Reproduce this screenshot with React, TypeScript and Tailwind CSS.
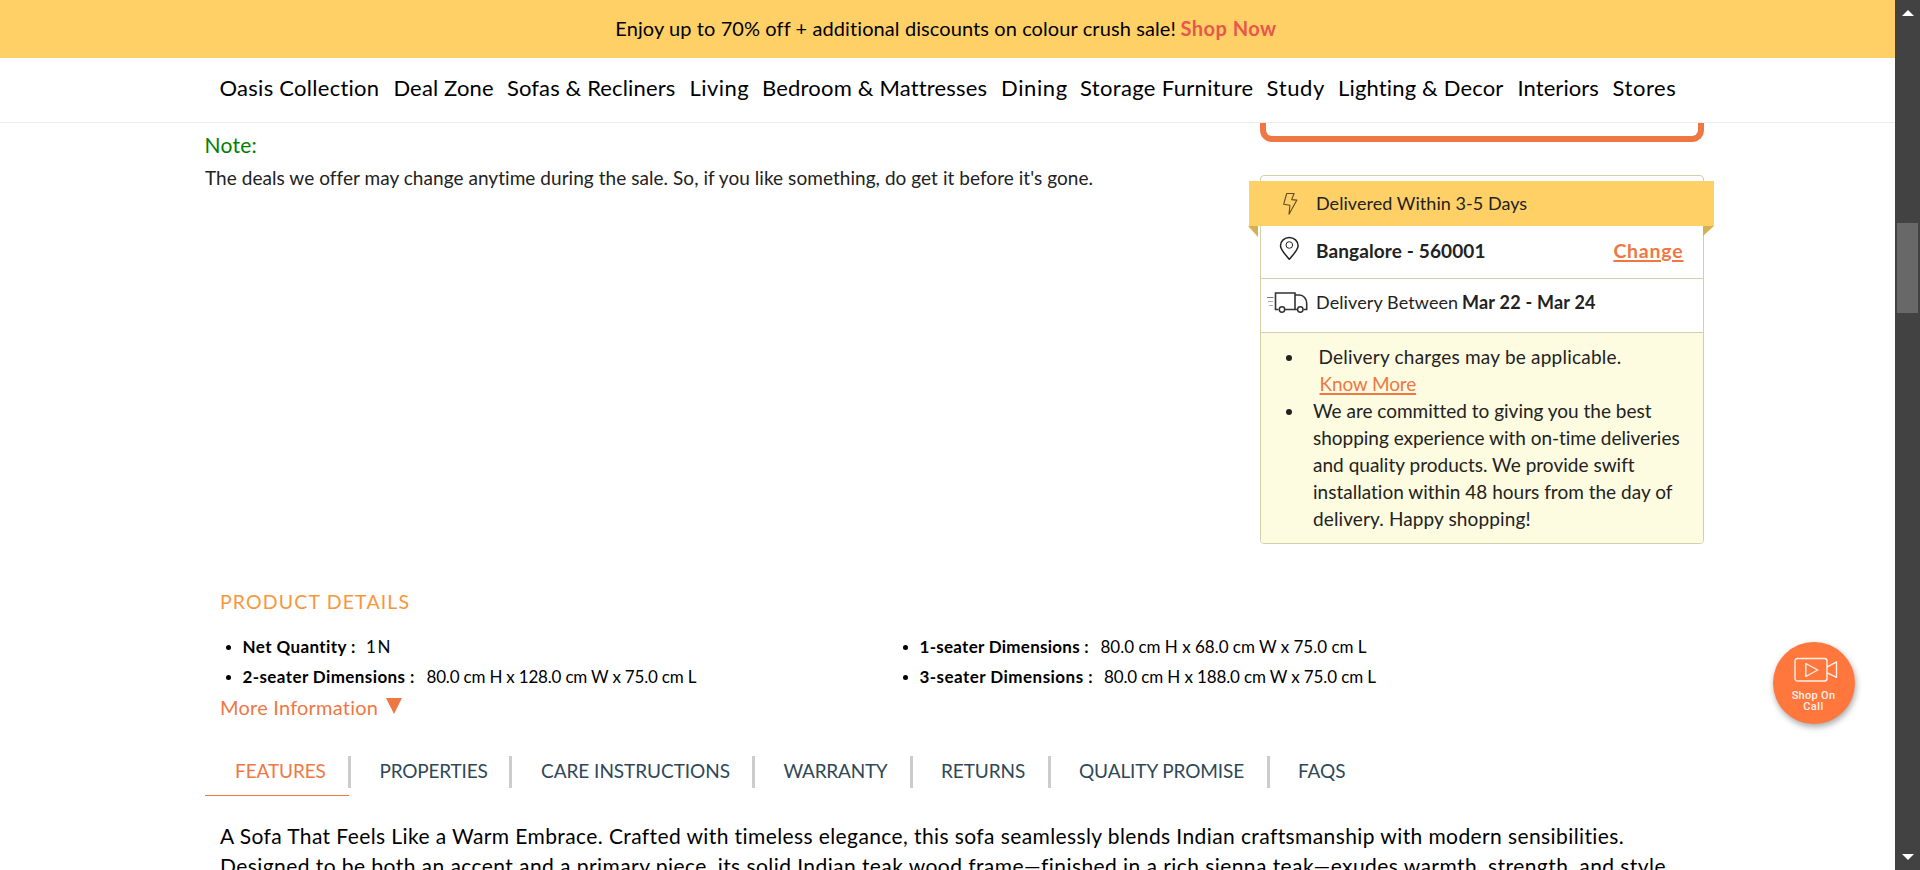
const NAV = [
  { label: "Oasis Collection", cls: "w-[173.9px] tracking-[0.27px]" },
  { label: "Deal Zone", cls: "w-[113.5px] tracking-[0.15px]" },
  { label: "Sofas & Recliners", cls: "w-[182.7px] tracking-[0.14px]" },
  { label: "Living", cls: "w-[72.5px] tracking-[0.42px]" },
  { label: "Bedroom & Mattresses", cls: "w-[239px] tracking-[0.18px]" },
  { label: "Dining", cls: "w-[79px] tracking-[0.6px]" },
  { label: "Storage Furniture", cls: "w-[186.5px] tracking-[0.33px]" },
  { label: "Study", cls: "w-[71.5px] tracking-[0.65px]" },
  { label: "Lighting & Decor", cls: "w-[179.5px] tracking-[0.15px]" },
  { label: "Interiors", cls: "w-[95px] tracking-[0.05px]" },
  { label: "Stores", cls: "tracking-[0.55px]" },
];

const TABS = [
  { label: "FEATURES", cls: "w-[146px] tracking-[-0.1px] text-[#ef7744]", pad: "pl-[30px]" },
  { label: "PROPERTIES", cls: "w-[161px] tracking-[-0.2px]", pad: "pl-[28.5px]" },
  { label: "CARE INSTRUCTIONS", cls: "w-[243px] tracking-[-0.04px]", pad: "pl-[29px]" },
  { label: "WARRANTY", cls: "w-[158px] tracking-[-0.25px]", pad: "pl-[28.5px]" },
  { label: "RETURNS", cls: "w-[138px] tracking-[-0.1px]", pad: "pl-[28px]" },
  { label: "QUALITY PROMISE", cls: "w-[219px] tracking-[-0.1px]", pad: "pl-[28px]" },
  { label: "FAQS", cls: "w-[100px] tracking-[-0.05px]", pad: "pl-[28px]" },
];

const DETAILS = [
  { label: "Net Quantity :", l: "w-[123.5px] tracking-[0.4px]", value: "1 N", v: "tracking-[-1.4px]" },
  { label: "1-seater Dimensions :", l: "w-[181px] tracking-[0.27px]", value: "80.0 cm H x 68.0 cm W x 75.0 cm L", v: "tracking-[-0.01px]" },
  { label: "2-seater Dimensions :", l: "w-[184px] tracking-[0.4px]", value: "80.0 cm H x 128.0 cm W x 75.0 cm L", v: "tracking-[-0.19px]" },
  { label: "3-seater Dimensions :", l: "w-[184.5px] tracking-[0.46px]", value: "80.0 cm H x 188.0 cm W x 75.0 cm L", v: "tracking-[-0.13px]" },
];

const POLICY = [
  { text: "We are committed to giving you the best", cls: "tracking-[-0.01px]" },
  { text: "shopping experience with on-time deliveries", cls: "tracking-[-0.02px]" },
  { text: "and quality products. We provide swift", cls: "tracking-[0.02px]" },
  { text: "installation within 48 hours from the day of", cls: "tracking-[0.01px]" },
  { text: "delivery. Happy shopping!", cls: "tracking-[0.12px]" },
];

function Header() {
  return (
    <header className="shrink-0">
      <div className="flex h-[58px] justify-center bg-[#ffd066] pr-[3px] text-[20px] leading-[56px] text-black">
        <span className="tracking-[0.09px]">Enjoy up to 70% off + additional discounts on colour crush sale!</span>
        <a className="ml-[4.5px] font-bold tracking-[0.5px] text-[#e9564b]">Shop Now</a>
      </div>
      <nav className="flex h-[65px] border-b border-[#ececec] bg-white pl-[219.5px] text-[22px] leading-[59px] text-black">
        {NAV.map((n) => (
          <a key={n.label} className={`shrink-0 ${n.cls}`}>{n.label}</a>
        ))}
      </nav>
    </header>
  );
}

function BoltIcon() {
  return (
    <svg className="ml-[22px] h-[24px] w-[15px] shrink-0" viewBox="0 0 15 24" fill="none" stroke="#5d4c26" strokeWidth="1.1" strokeLinejoin="round">
      <path d="M3.7 1.5h7.4L8.6 7.6l5.3.5L6 22.2l.9-8.9-6.2-1.1z" />
    </svg>
  );
}

function PinIcon() {
  return (
    <svg className="mt-[10px] ml-[18px] h-[25px] w-[21px] shrink-0" viewBox="0 0 21 25" fill="none" stroke="#222">
      <path strokeWidth="1.5" strokeLinejoin="round" d="M10.3 23.3C8 20.4 1.5 14 1.5 9.7a8.8 8.3 0 0 1 17.6 0C19.1 14 12.6 20.4 10.3 23.3z" />
      <circle cx="10.3" cy="9" r="3.3" strokeWidth="1" />
    </svg>
  );
}

function TruckIcon() {
  return (
    <svg className="mt-[10px] ml-[5px] h-[25px] w-[43px] shrink-0" viewBox="0 0 43 25" fill="none" stroke="#333">
      <g strokeWidth="1">
        <path d="M1 8.5h6.500" stroke="#777" />
        <path d="M2 12.5h5M3 16.500h4" stroke="#aaa" />
      </g>
      <path strokeWidth="1.6" d="M12.5 20.5H9.5V4h19.5v16.5H19M29 6h4.500c4 0 7.200 4 7.200 8.500v6H37.500M29 20.500h2" />
      <circle cx="16" cy="20.5" r="2.7" strokeWidth="1.5" />
      <circle cx="34.3" cy="20.5" r="2.7" strokeWidth="1.5" />
    </svg>
  );
}

function DeliveryCard() {
  return (
    <div className="mt-[33px] h-[369px] rounded-[4px] border border-[#d3cfa9] pt-[5px] text-[18px] text-[#222]">
      <div className="relative -mr-[11px] -ml-[12px] flex h-[45px] items-center bg-[#ffd066]">
        <svg className="absolute top-[45px] -left-px h-[11px] w-[10px]" viewBox="0 0 10 11">
          <path d="M0 0h10v11z" fill="#d5b152" />
        </svg>
        <svg className="absolute top-[45px] right-0 h-[10px] w-[11px]" viewBox="0 0 11 10">
          <path d="M0 0h11L0 10z" fill="#d5b152" />
        </svg>
        <div className="flex w-[67px] pl-[12px]"><BoltIcon /></div>
        <span className="tracking-[0.05px]">Delivered Within 3-5 Days</span>
      </div>
      <div className="flex h-[53px] border-b border-[#d3cfa9] leading-[49px]">
        <div className="w-[54px] shrink-0"><PinIcon /></div>
        <span className="grow pl-px text-[19px] font-bold tracking-[0.12px]">Bangalore - 560001</span>
        <a className="mr-[19.5px] text-[19.5px] font-bold tracking-[0.8px] text-[#ef7744] underline decoration-2 underline-offset-[2px]">Change</a>
      </div>
      <div className="flex h-[54px] border-b border-[#d3cfa9] leading-[46px]">
        <div className="w-[55px] shrink-0"><TruckIcon /></div>
        <span className="w-[146px] tracking-[0.1px]">Delivery Between</span>
        <span className="font-bold tracking-[0.22px]">Mar 22 - Mar 24</span>
      </div>
      <div className="h-[210px] rounded-b-[3px] bg-[#fdfbe0] pt-[10px] text-[19px] leading-[27px]">
        <div className="flex">
          <span className="mt-[12px] ml-[25px] h-[6px] w-[6px] shrink-0 rounded-full bg-[#222]" />
          <div className="ml-[26.5px]">
            <div className="tracking-[0.22px]">Delivery charges may be applicable.</div>
            <a className="ml-px tracking-[-0.15px] text-[#ef7744] underline decoration-2 underline-offset-[2px]">Know More</a>
          </div>
        </div>
        <div className="flex">
          <span className="mt-[12px] ml-[25px] h-[6px] w-[6px] shrink-0 rounded-full bg-[#222]" />
          <p className="ml-[21px]">
            {POLICY.map((p) => (
              <span key={p.text} className={`block whitespace-nowrap ${p.cls}`}>{p.text}</span>
            ))}
          </p>
        </div>
      </div>
    </div>
  );
}

function ProductDetails() {
  return (
    <section className="pl-[15px] text-black">
      <h2 className="text-[19.5px] leading-[30px] tracking-[1.15px] text-[#f8963c]">PRODUCT DETAILS</h2>
      <ul className="mt-[15px] grid grid-cols-[677px_600px] text-[17px] leading-[30px]">
        {DETAILS.map((d) => (
          <li key={d.label} className="flex">
            <span className="mt-[13px] ml-[6px] h-[5px] w-[5px] shrink-0 rounded-full bg-black" />
            <span className={`ml-[11.5px] shrink-0 font-bold ${d.l}`}>{d.label}</span>
            <span className={d.v}>{d.value}</span>
          </li>
        ))}
      </ul>
      <a className="flex h-[30px] text-[20px] leading-[30px] tracking-[0.22px] text-[#ef7744]">
        More Information
        <svg className="mt-[6px] ml-[7.5px] h-[16px] w-[16px]" viewBox="0 0 16 16">
          <path d="M0 0h16L8 16z" fill="#ef7744" />
        </svg>
      </a>
    </section>
  );
}

function Tabs() {
  return (
    <div className="mt-[34px] flex text-[19px] leading-[30px] text-[#2f4858]">
      {TABS.map((t, i) => (
        <div key={t.label} className={`shrink-0 ${t.cls}`}>
          <div className={`h-[32px] border-[#ccc] whitespace-nowrap ${t.pad} ${i < TABS.length - 1 ? "border-r-[3px]" : ""}`}>{t.label}</div>
          {i === 0 && <div className="mt-[7px] mr-[2px] h-px bg-[#ef7744]" />}
        </div>
      ))}
    </div>
  );
}

function ShopOnCall() {
  return (
    <button className="absolute top-[641.5px] left-[1772.5px] h-[82px] w-[82px] rounded-full bg-[#ff773d] font-['Roboto',sans-serif] text-[11px] leading-[11px] font-medium text-[#fff0e8] shadow-[1px_3px_6px_rgba(0,0,0,0.35)]">
      <svg className="mt-[4px] ml-[21px] h-[26px] w-[44px]" viewBox="0 0 44 26" fill="none" stroke="#fff0e8" strokeWidth="1.4" strokeLinejoin="round">
        <rect x="1" y="1.5" width="32" height="22.5" rx="2.5" />
        <path d="M11.8 6.5v13l12-6.5zM33.3 9.8l9.200-5v15.500l-9.200-4.500" />
      </svg>
      <span className="mt-[7px] block tracking-[0.3px]">Shop On</span>
      <span className="block tracking-[0.5px]">Call</span>
    </button>
  );
}

function Scrollbar() {
  return (
    <div className="flex h-full w-[25px] shrink-0 flex-col items-center bg-[#424242]">
      <svg className="mt-[10px] h-[6px] w-[12px] shrink-0" viewBox="0 0 12 6"><path d="M0 6L6 0l6 6z" fill="#fff" /></svg>
      <div className="mt-[207px] mr-px h-[90px] w-[21px] bg-[#686868]" />
      <svg className="mt-auto mb-[10px] h-[6px] w-[12px] shrink-0" viewBox="0 0 12 6"><path d="M0 0h12L6 6z" fill="#fff" /></svg>
    </div>
  );
}

export default function App() {
  return (
    <div className="relative flex h-[870px] w-[1920px] overflow-hidden bg-white font-['Lato',sans-serif] whitespace-nowrap">
      <div className="flex h-full w-[1895px] shrink-0 flex-col overflow-hidden">
        <Header />
        <main className="pl-[205px]">
          <div className="flex h-[464px]">
            <div className="w-[1055px] shrink-0 pt-[6px]">
              <div className="text-[21px] leading-[32px] tracking-[0.25px] text-[#008000] -indent-[0.5px]">Note:</div>
              <p className="text-[19px] leading-[34px] tracking-[0.05px] text-[#222]">
                The deals we offer may change anytime during the sale. So, if you like something, do get it before it's gone.
              </p>
            </div>
            <div className="w-[444px] shrink-0">
              <div className="h-[19px] rounded-b-[12px] border-x-[6px] border-b-[6px] border-[#ef7744]" />
              <DeliveryCard />
            </div>
          </div>
          <ProductDetails />
          <Tabs />
          <div className="mt-[25px] pl-[15px] text-[21px] leading-[30px] text-black">
            <span className="block tracking-[0.4px]">
              A Sofa That Feels Like a Warm Embrace. Crafted with timeless elegance, this sofa seamlessly blends Indian craftsmanship with modern sensibilities.
            </span>
            <span className="block tracking-[0.43px]">
              Designed to be both an accent and a primary piece, its solid Indian teak wood frame—finished in a rich sienna teak—exudes warmth, strength, and style
            </span>
          </div>
        </main>
      </div>
      <Scrollbar />
      <ShopOnCall />
    </div>
  );
}
